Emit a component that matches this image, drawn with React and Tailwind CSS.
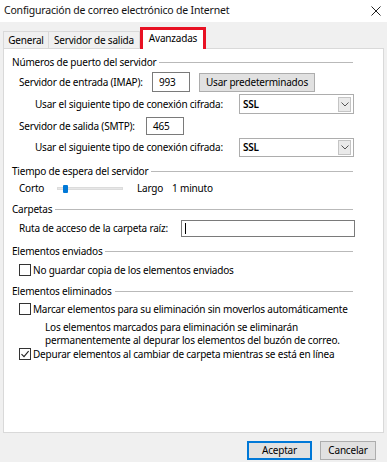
import React from "react";

const font = "font-['Noto_Sans',sans-serif]";

function GroupLabel({ children, className = "" }) {
  return (
    <div className={"flex items-center h-[14px] pl-[8px] pr-[30px] " + className}>
      <span className="whitespace-nowrap">{children}</span>
      <div className="flex-1 h-px bg-[#b9b9b9] ml-[3px] mt-px" />
    </div>
  );
}

function Checkbox({ checked }) {
  return (
    <div className="w-[12px] h-[12px] border border-[#333] bg-white flex items-center justify-center shrink-0">
      {checked && (
        <svg width="10" height="10" viewBox="0 0 10 10">
          <path d="M1.5 5.2 L4 7.7 L8.6 2.2" fill="none" stroke="#222" strokeWidth="1.1" />
        </svg>
      )}
    </div>
  );
}

function Select({ value }) {
  return (
    <div className="w-[115px] h-full border border-[#adadad] bg-white flex items-center pl-[3px] pr-[2px]">
      <span className="flex-1 font-semibold">{value}</span>
      <div className="w-[13px] h-[15px] bg-[#eaeaea] border border-[#c4c4c4] flex items-center justify-center">
        <svg width="8" height="5" viewBox="0 0 8 5">
          <path d="M0.5 0.5 L4 4 L7.5 0.5" fill="none" stroke="#555" strokeWidth="1" />
        </svg>
      </div>
    </div>
  );
}

export default function App() {
  return (
    <div className={"w-[387px] h-[462px] bg-[#f0f0f0] text-[10px] tracking-[-0.2px] text-black overflow-hidden flex flex-col " + font}>
      {/* Title bar */}
      <div className="h-[22px] bg-white flex items-center justify-between pl-[4px] pr-[5px] shrink-0">
        <span className="text-[10.5px] text-[#111]">Configuración de correo electrónico de Internet</span>
        <svg width="10" height="10" viewBox="0 0 10 10" className="mr-[1px]">
          <path d="M0.5 0.5 L9.5 9.5 M9.5 0.5 L0.5 9.5" stroke="#222" strokeWidth="1" />
        </svg>
      </div>

      {/* Tabs */}
      <div className="h-[26px] shrink-0 flex items-end pl-[3px]">
        <div className="w-[46px] h-[17px] border border-b-0 border-[#d9d9d9] bg-[#f0f0f0] flex items-center justify-center">General</div>
        <div className="w-[91px] h-[17px] border border-b-0 border-l-0 border-[#d9d9d9] bg-[#f0f0f0] flex items-center justify-center">Servidor de salida</div>
        <div className="relative w-[66px] h-[22px] bg-white border-[3px] border-b-0 border-[#e81123] flex items-center justify-center pb-[2px] -mb-px z-10">
          Avanzadas
        </div>
      </div>

      {/* Panel */}
      <div className="mx-[3px] h-[385px] shrink-0 bg-white border border-[#d9d9d9] flex flex-col">
        <GroupLabel className="mt-[6px]">Números de puerto del servidor</GroupLabel>

        <div className="mt-[3px] h-[20px] flex items-center pl-[15px]">
          <span className="w-[133px]">Servidor de entrada (IMAP):</span>
          <div className="w-[38px] h-full border border-[#7a7a7a] flex items-center pl-[6px]">993</div>
          <div className="ml-[9px] w-[116px] h-[19px] bg-[#e1e1e1] border border-[#adadad] flex items-center justify-center">
            Usar predeterminados
          </div>
        </div>

        <div className="mt-[2px] h-[20px] flex items-center pl-[31px]">
          <span className="w-[204px]">Usar el siguiente tipo de conexión cifrada:</span>
          <Select value="SSL" />
        </div>

        <div className="mt-[3px] h-[18px] flex items-center pl-[15px]">
          <span className="w-[127px]">Servidor de salida (SMTP):</span>
          <div className="w-[38px] h-full border border-[#7a7a7a] flex items-center pl-[6px]">465</div>
        </div>

        <div className="mt-[3px] h-[19px] flex items-center pl-[31px]">
          <span className="w-[204px]">Usar el siguiente tipo de conexión cifrada:</span>
          <Select value="SSL" />
        </div>

        <GroupLabel className="mt-[7px]">Tiempo de espera del servidor</GroupLabel>

        <div className="mt-[3px] h-[14px] flex items-center pl-[15px]">
          <span className="w-[38px] shrink-0">Corto</span>
          <div className="relative w-[66px] shrink-0 h-[3px] bg-[#e7e7e7] border border-[#dcdcdc]">
            <div className="absolute left-[5px] -top-[3px] w-[5px] h-[8px] bg-[#0078d7] rounded-[1px]" />
          </div>
          <span className="ml-[14px]">Largo</span>
          <span className="ml-[9px]">1 minuto</span>
        </div>

        <GroupLabel className="mt-[7px]">Carpetas</GroupLabel>

        <div className="mt-[4px] h-[17px] flex items-center pl-[15px]">
          <span className="w-[162px]">Ruta de acceso de la carpeta raíz:</span>
          <div className="w-[174px] h-full border border-[#7a7a7a] flex items-center pl-[3px]">
            <div className="w-px h-[11px] bg-black" />
          </div>
        </div>

        <GroupLabel className="mt-[7px]">Elementos enviados</GroupLabel>

        <div className="mt-[5px] h-[14px] flex items-center pl-[15px] gap-[2px]">
          <Checkbox />
          <span>No guardar copia de los elementos enviados</span>
        </div>

        <GroupLabel className="mt-[7px]">Elementos eliminados</GroupLabel>

        <div className="mt-[4px] h-[14px] flex items-center pl-[15px] gap-[2px]">
          <Checkbox />
          <span>Marcar elementos para su eliminación sin moverlos automáticamente</span>
        </div>

        <div className="mt-[5px] pl-[41px] leading-[13px]">
          <div>Los elementos marcados para eliminación se eliminarán</div>
          <div>permanentemente al depurar los elementos del buzón de correo.</div>
        </div>

        <div className="h-[14px] flex items-center pl-[15px] gap-[2px]">
          <Checkbox checked />
          <span>Depurar elementos al cambiar de carpeta mientras se está en línea</span>
        </div>
      </div>

      {/* Buttons */}
      <div className="mt-[8px] flex justify-end pr-[11px] gap-[8px]">
        <div className="w-[65px] h-[19px] bg-[#e1e1e1] border-2 border-[#0078d7] flex items-center justify-center">Aceptar</div>
        <div className="w-[56px] h-[19px] bg-[#e1e1e1] border border-[#adadad] flex items-center justify-center">Cancelar</div>
      </div>
    </div>
  );
}
